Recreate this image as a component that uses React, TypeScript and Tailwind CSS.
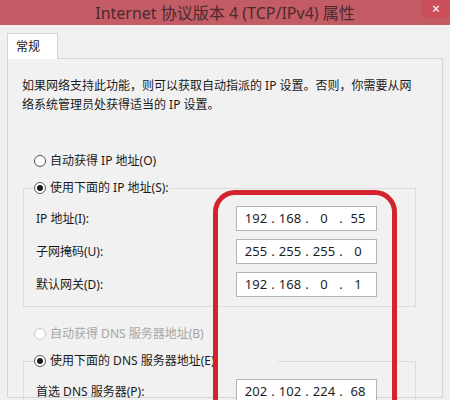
import React from 'react';

const ipRows = [
  { label: 'IP 地址(I):', value: ['192', '168', '0', '55'] },
  { label: '子网掩码(U):', value: ['255', '255', '255', '0'] },
  { label: '默认网关(D):', value: ['192', '168', '0', '1'] },
];

const IpBox = ({ parts }: { parts: string[] }) => (
  <div className="flex h-[25px] w-[141px] items-center border border-[#b4b4b4] bg-white pl-[5px] font-['Noto_Sans',sans-serif] text-[13px] text-[#1e1e1e]">
    {parts.map((p, i) => (
      <React.Fragment key={i}>
        <span className="w-[28px] text-center">{p}</span>
        {i < 3 && <span className="w-[6px] text-center">.</span>}
      </React.Fragment>
    ))}
  </div>
);

const Radio = ({ checked = false, disabled = false }: { checked?: boolean; disabled?: boolean }) => (
  <span
    className={`flex h-[12px] w-[12px] shrink-0 items-center justify-center rounded-full border bg-white ${
      disabled ? 'border-[#c8c8c8]' : 'border-[#555]'
    }`}
  >
    {checked && <span className="h-[6px] w-[6px] rounded-full bg-[#1a1a1a]" />}
  </span>
);

const Option = ({
  label,
  checked,
  disabled,
}: {
  label: string;
  checked?: boolean;
  disabled?: boolean;
}) => (
  <div className={`flex h-[20px] items-center gap-[4px] ${disabled ? 'text-[#a6a6a6]' : 'text-[#1a1a1a]'}`}>
    <Radio checked={checked} disabled={disabled} />
    <span>{label}</span>
  </div>
);

export default function App() {
  return (
    <div className="relative h-[400px] w-[450px] overflow-hidden bg-[#f0f0f0] font-['Noto_Sans','Noto_Sans_CJK_SC',sans-serif] text-[12px] text-[#1a1a1a]">
      {/* title bar */}
      <div className="relative flex h-[25px] items-center justify-center bg-[#c45c66]">
        <span className="text-[16px] leading-none text-[#4a2a2f]">Internet 协议版本 4 (TCP/IPv4) 属性</span>
        <div className="absolute right-0 top-0 flex h-[18px] w-[28px] items-center justify-center bg-[#cb4f5a] text-[14px] leading-none text-white">
          ×
        </div>
      </div>

      <div className="px-[7px] pt-[8px]">
        {/* tab */}
        <div className="relative z-10 -mb-px flex h-[26px] w-[51px] items-center border border-b-0 border-[#d4d4d4] bg-white pl-[8px]">
          常规
        </div>

        {/* panel */}
        <div className="h-[340px] border border-[#d4d4d4] bg-[#f1f1f1] px-[14px] pt-[17px]">
          <p className="leading-[19px]">
            如果网络支持此功能，则可以获取自动指派的 IP 设置。否则，你需要从网
            <br />
            络系统管理员处获得适当的 IP 设置。
          </p>

          <div className="ml-[12px] mt-[37px]">
            <Option label="自动获得 IP 地址(O)" />
          </div>

          <fieldset className="ml-[1px] mr-[12px] mt-[7px] border border-[#dcdcdc] pb-[9px] pl-[12px]">
            <legend className="-ml-[2px]">
              <Option label="使用下面的 IP 地址(S):" checked />
            </legend>
            <div className="flex flex-col gap-[8px] pt-[8px]">
              {ipRows.map((r) => (
                <div key={r.label} className="grid grid-cols-[200px_141px] items-center">
                  <span>{r.label}</span>
                  <IpBox parts={r.value} />
                </div>
              ))}
            </div>
          </fieldset>

          <div className="ml-[12px] mt-[17px]">
            <Option label="自动获得 DNS 服务器地址(B)" disabled />
          </div>

          <fieldset className="ml-[1px] mr-[12px] mt-[7px] border border-[#dcdcdc] pl-[12px]">
            <legend className="-ml-[2px] pr-[60px]">
              <Option label="使用下面的 DNS 服务器地址(E):" checked />
            </legend>
            <div className="flex flex-col gap-[8px] pt-[8px]">
              <div className="grid grid-cols-[200px_141px] items-center">
                <span>首选 DNS 服务器(P):</span>
                <IpBox parts={['202', '102', '224', '68']} />
              </div>
            </div>
          </fieldset>
        </div>
      </div>

      {/* red annotation */}
      <div className="pointer-events-none absolute left-[213px] top-[190px] h-[260px] w-[184px] rounded-[22px] border-[5px] border-[#d3242d]" />
    </div>
  );
}
